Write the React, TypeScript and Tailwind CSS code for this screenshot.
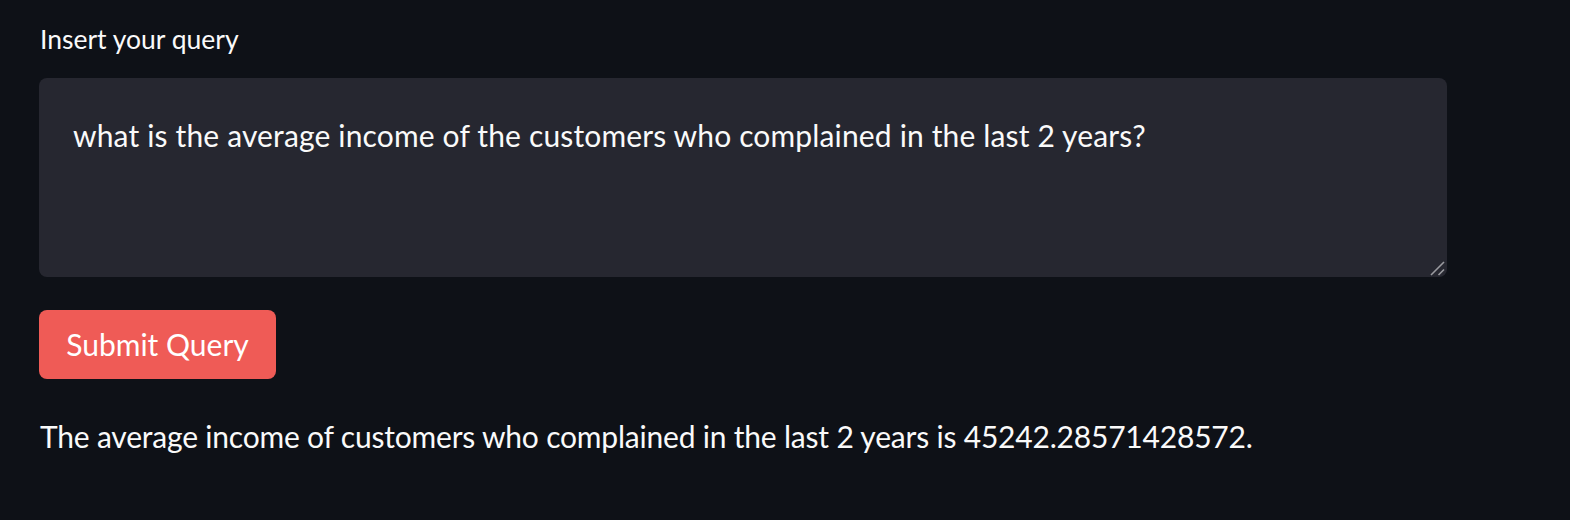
export default function App() {
  return (
    <div
      className="min-h-[520px] w-full bg-[#0e1117] text-[#fafafa]"
      style={{ fontFamily: 'Lato, "Noto Sans", sans-serif' }}
    >
      <div className="flex w-[1447px] flex-col pl-[39px] pt-[16px]">
        <label className="pl-px text-[26.5px] leading-[46px]">Insert your query</label>

        <div className="relative mt-[16px] h-[199px] w-[1408px] rounded-[8px] bg-[#262730] px-[34px] pt-[32px]">
          <p className="text-[30px] leading-[51px] tracking-[0.15px]">
            what is the average income of the customers who complained in the last 2 years?
          </p>
          {/* resize grip */}
          <svg
            className="absolute bottom-px right-[2px]"
            width="15"
            height="15"
            viewBox="0 0 15 15"
          >
            <line x1="1" y1="14" x2="14" y2="1" stroke="#9a9ba0" strokeWidth="1.6" />
            <line x1="8.5" y1="14" x2="14" y2="8.5" stroke="#9a9ba0" strokeWidth="1.6" />
          </svg>
        </div>

        <div className="mt-[33px]">
          <button className="h-[69px] w-[237px] rounded-[8px] bg-[#ef5b56] text-[30px] text-white">
            Submit Query
          </button>
        </div>

        <p className="mt-[32px] pl-px text-[30px] leading-[51px] tracking-[-0.2px]">
          The average income of customers who complained in the last 2 years is 45242.28571428572.
        </p>
      </div>
    </div>
  );
}
